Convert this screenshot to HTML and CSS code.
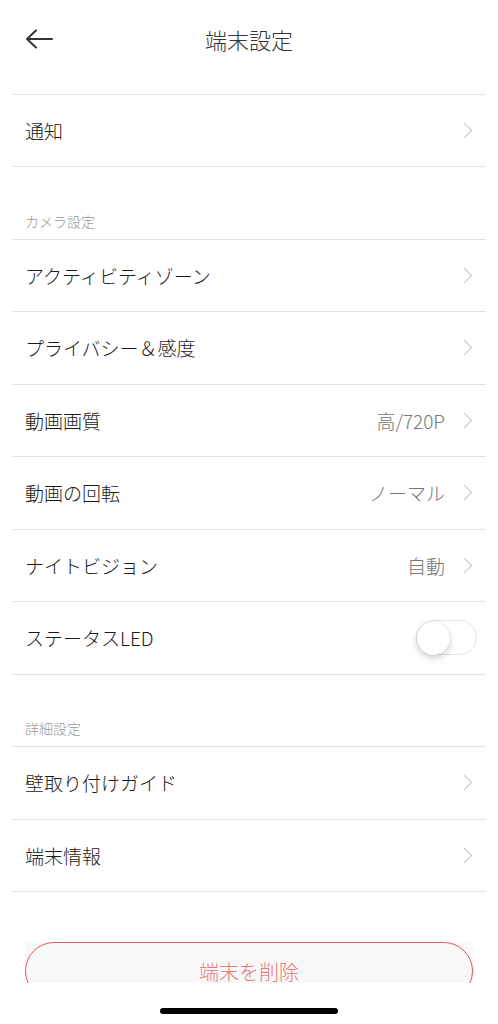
FILE: index.html
```html
<!DOCTYPE html>
<html lang="ja">
<head>
  <meta charset="UTF-8" />
  <meta name="viewport" content="width=device-width, initial-scale=1" />
  <title>端末設定</title>
  <link rel="stylesheet" href="styles.css">
</head>
<body>

<div class="screen">
  <div class="content">
    <div class="topbar">
      <svg class="back" width="28" height="20" viewBox="0 0 28 20">
        <path d="M27 10H2M11 1.5L2 10l9 8.5" fill="none" stroke="#333" stroke-width="2" stroke-linecap="round" stroke-linejoin="round"/>
      </svg>
      <div class="title">端末設定</div>
    </div>

    <div class="list">
      <div class="row">
        <span class="label">通知</span>
        <span class="chev"></span>
      </div>

      <div class="section">カメラ設定</div>
      <div class="row">
        <span class="label">アクティビティゾーン</span>
        <span class="chev"></span>
      </div>
      <div class="row">
        <span class="label">プライバシー＆感度</span>
        <span class="chev"></span>
      </div>
      <div class="row">
        <span class="label">動画画質</span>
        <span class="value">高/720P</span>
        <span class="chev"></span>
      </div>
      <div class="row">
        <span class="label">動画の回転</span>
        <span class="value">ノーマル</span>
        <span class="chev"></span>
      </div>
      <div class="row">
        <span class="label">ナイトビジョン</span>
        <span class="value">自動</span>
        <span class="chev"></span>
      </div>
      <div class="row">
        <span class="label">ステータスLED</span>
        <span class="toggle"><span class="knob"></span></span>
      </div>

      <div class="section">詳細設定</div>
      <div class="row">
        <span class="label">壁取り付けガイド</span>
        <span class="chev"></span>
      </div>
      <div class="row">
        <span class="label">端末情報</span>
        <span class="chev"></span>
      </div>
    </div>

    <div class="actions">
      <button class="delete">端末を削除</button>
    </div>
  </div>

  <div class="homebar"><span class="indicator"></span></div>
</div>

</body>
</html>
```

FILE: styles.css
```css
body {
  margin: 0;
  background-color: #fff;
  font-family: "Noto Sans CJK JP", "Noto Sans", sans-serif;
  font-weight: 300;
  color: #1a1a1a;
}
.screen {
  width: 498px;
  height: 1024px;
  overflow: hidden;
}
.content {
  height: 983px;
  overflow: hidden;
}
.topbar {
  position: relative;
  height: 78px;
  display: flex;
  align-items: center;
  justify-content: center;
}
.back {
  position: absolute;
  left: 25px;
  top: 29px;
}
.title {
  font-size: 22px;
  color: #333;
}
.list {
  margin: 15.5px 12px 0;
  border-top: 1px solid #e2e2e2;
}
.row, .section {
  box-sizing: border-box;
  height: 72.5px;
  border-bottom: 1px solid #e2e2e2;
}
.row {
  display: flex;
  align-items: center;
  padding: 0 12px 0 13px;
}
.label {
  flex: 1;
  font-size: 19px;
}
.value {
  font-size: 19px;
  color: #777;
  margin-right: 14px;
}
.chev {
  width: 10px;
  height: 10px;
  border-top: 1.6px solid #c4c4c4;
  border-right: 1.6px solid #c4c4c4;
  transform: rotate(45deg);
  margin-right: 4px;
}
.section {
  display: flex;
  align-items: flex-end;
  padding: 0 13px 10px;
  font-size: 14px;
  line-height: 16px;
  color: #9a9a9a;
}
.toggle {
  position: relative;
  box-sizing: border-box;
  width: 61px;
  height: 35px;
  margin-right: -3px;
  border: 1.5px solid #e4e4e4;
  border-radius: 18px;
  background-color: #fff;
}
.knob {
  position: absolute;
  left: 0;
  top: 1px;
  width: 33px;
  height: 33px;
  border-radius: 50%;
  background-color: #fff;
  box-shadow: 0 3px 7px rgba(0,0,0,0.2), 0 0 1px rgba(0,0,0,0.15);
}
.actions {
  margin: 50px 25px 0;
  background-color: #f8f8f8;
}
.delete {
  display: block;
  width: 100%;
  height: 58px;
  border: 1.5px solid #df5b5b;
  border-radius: 29px;
  background-color: transparent;
  font-family: inherit;
  font-weight: 300;
  font-size: 20px;
  color: #e77a7a;
}
.homebar {
  height: 41px;
  display: flex;
  justify-content: center;
  padding-top: 25px;
  box-sizing: border-box;
}
.indicator {
  width: 178px;
  height: 6px;
  border-radius: 3px;
  background-color: #000;
}
```
